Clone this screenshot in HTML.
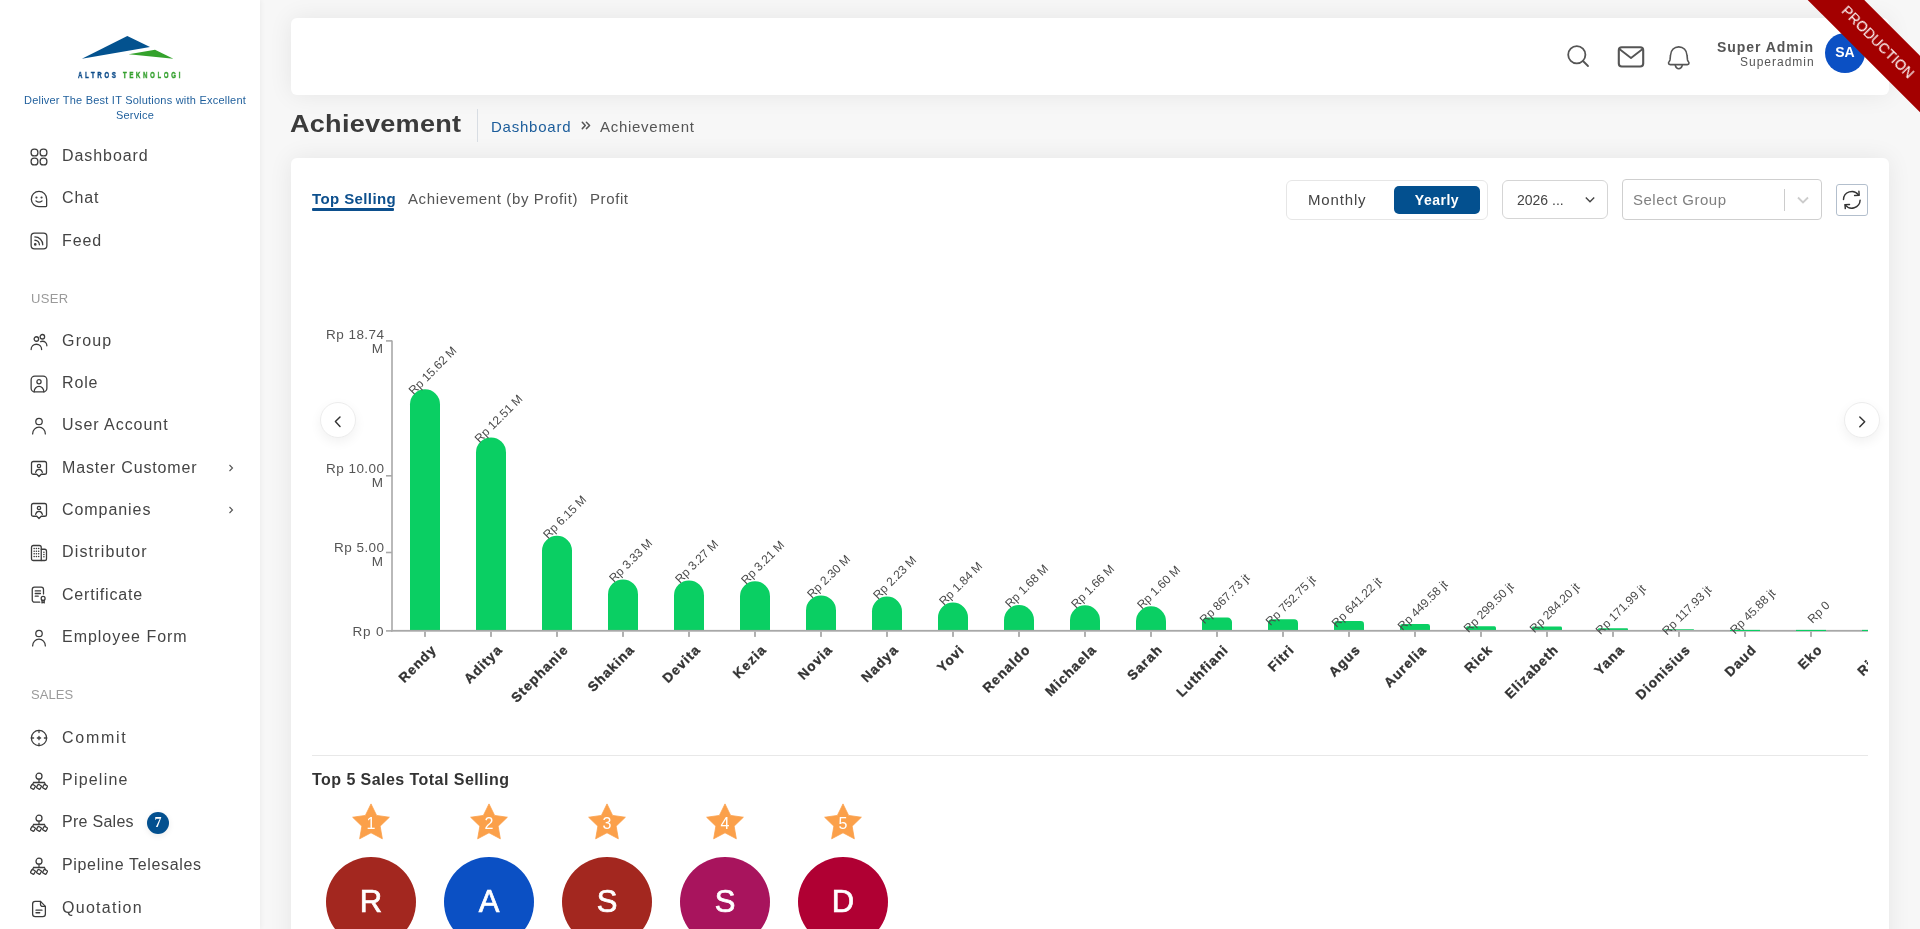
<!DOCTYPE html>
<html><head><meta charset="utf-8">
<style>
*{box-sizing:border-box;margin:0;padding:0}
html,body{width:1920px;height:929px;overflow:hidden}
body{background:#f7f7f7;font-family:"Liberation Sans",sans-serif;color:#444;position:relative;-webkit-font-smoothing:antialiased}
.abs{position:absolute;white-space:nowrap;line-height:1;will-change:transform}
#sidebar{position:absolute;left:0;top:0;width:260px;height:929px;background:#fff;box-shadow:1px 0 5px rgba(0,0,0,0.05);z-index:1}
.mi{position:absolute;left:62px;font-size:16px;color:#444;letter-spacing:0.65px;line-height:1;white-space:nowrap;will-change:transform}
.ic{position:absolute;left:30px;width:18px;height:18px}
.ic svg{display:block;width:18px;height:18px;fill:none;stroke:#3c3c3c;stroke-width:1.7;stroke-linecap:round;stroke-linejoin:round}
.sec{position:absolute;left:31px;font-size:13px;color:#9a9a9a;letter-spacing:0.4px;line-height:1;will-change:transform}
.chev{position:absolute;left:228px;width:6px;height:10px}
.card{position:absolute;background:#fff;border-radius:6px;box-shadow:0 0 24px rgba(0,0,0,0.075)}
</style></head><body>

<div id="sidebar">
  <svg class="abs" style="left:0;top:0" width="260" height="90" viewBox="0 0 260 90">
    <polygon points="81.9,58.8 127.3,36 150,47.1" fill="#03528f"/>
    <polygon points="128.6,54.3 155,49.8 173.4,58.8" fill="#34a22c"/>
  </svg>
  <div class="abs" style="left:77.5px;top:70.6px;font-size:9.2px;font-weight:700;letter-spacing:4.05px;transform:scaleX(0.66);transform-origin:0 0;-webkit-text-stroke:0.45px currentColor"><span style="color:#0d4c8a">ALTROS</span> <span style="color:#34a02e">TEKNOLOGI</span></div>
  <div class="abs" style="left:4.7px;width:260px;text-align:center;top:93.2px;font-size:11px;line-height:14.8px;color:#1f5f9c;white-space:normal;padding:0 12px;letter-spacing:0.22px">Deliver The Best IT Solutions with Excellent Service</div>
  <div class="ic" style="top:147.6px"><svg viewBox="0 0 24 24"><rect x="1.5" y="1.5" width="9" height="9" rx="4"/><rect x="13.5" y="1.5" width="9" height="9" rx="4"/><rect x="1.5" y="13.5" width="9" height="9" rx="4"/><rect x="13.5" y="13.5" width="9" height="9" rx="4"/></svg></div>
  <div class="mi" style="top:148.1px;letter-spacing:0.93px">Dashboard</div>
  <div class="ic" style="top:189.5px"><svg viewBox="0 0 24 24"><path d="M12 1.8C6.2 1.8 1.8 6.4 1.8 12.2c0 5.6 4.4 9.9 10.2 9.9h9.2c.6 0 1-.4 1-1v-8.9C22.2 6.4 17.8 1.8 12 1.8z"/><circle cx="8.6" cy="10" r=".6" fill="#3c3c3c"/><circle cx="15.4" cy="10" r=".6" fill="#3c3c3c"/><path d="M8 14.6c2.2 1.6 5.8 1.6 8 0"/></svg></div>
  <div class="mi" style="top:190.0px;letter-spacing:0.87px">Chat</div>
  <div class="ic" style="top:232.0px"><svg viewBox="0 0 24 24"><rect x="1.5" y="1.5" width="21" height="21" rx="4.5"/><path d="M6.5 6.5c5.8 0 10.5 4.7 10.5 10.5"/><path d="M6.5 11c3.3 0 6 2.7 6 6"/><circle cx="7" cy="16.5" r=".9" fill="#3c3c3c"/></svg></div>
  <div class="mi" style="top:232.5px;letter-spacing:0.93px">Feed</div>
  <div class="ic" style="top:332.7px"><svg viewBox="0 0 24 24"><circle cx="8.5" cy="8" r="3"/><circle cx="16.5" cy="5" r="3"/><path d="M1.5 22c0-4 3.1-7 7-7s7 3 7 7"/><path d="M14 11.6c.8-.4 1.6-.6 2.5-.6 3.3 0 6 2.6 6 6"/></svg></div>
  <div class="mi" style="top:333.2px;letter-spacing:1.2px">Group</div>
  <div class="ic" style="top:374.6px"><svg viewBox="0 0 24 24"><rect x="1.5" y="1.5" width="21" height="21" rx="5"/><circle cx="12" cy="9" r="2.8"/><path d="M5.5 22.5c0-4 2.9-7.2 6.5-7.2s6.5 3.2 6.5 7.2"/></svg></div>
  <div class="mi" style="top:375.1px;letter-spacing:0.87px">Role</div>
  <div class="ic" style="top:416.6px"><svg viewBox="0 0 24 24"><circle cx="12" cy="6" r="4.3"/><path d="M3.5 22.5c0-5 3.8-9 8.5-9s8.5 4 8.5 9"/></svg></div>
  <div class="mi" style="top:417.1px;letter-spacing:0.95px">User Account</div>
  <div class="ic" style="top:459.8px"><svg viewBox="0 0 24 24"><path d="M4.5 2h15c1.6 0 2.5.9 2.5 2.5v12c0 1.6-.9 2.5-2.5 2.5h-4.5l-3 3-3-3h-4.5C2.9 19 2 18.1 2 16.5v-12C2 2.9 2.9 2 4.5 2z"/><circle cx="12" cy="8" r="2.2"/><path d="M7.5 16.5c.6-2.4 2.3-4 4.5-4s3.9 1.6 4.5 4"/></svg></div>
  <div class="mi" style="top:460.3px;letter-spacing:0.85px">Master Customer</div>
  <svg class="chev" style="top:463.0px" viewBox="0 0 6 10"><path d="M1.5 2l3 3-3 3" fill="none" stroke="#555" stroke-width="1.1"/></svg>
  <div class="ic" style="top:501.9px"><svg viewBox="0 0 24 24"><path d="M4.5 2h15c1.6 0 2.5.9 2.5 2.5v12c0 1.6-.9 2.5-2.5 2.5h-4.5l-3 3-3-3h-4.5C2.9 19 2 18.1 2 16.5v-12C2 2.9 2.9 2 4.5 2z"/><circle cx="12" cy="8" r="2.2"/><path d="M7.5 16.5c.6-2.4 2.3-4 4.5-4s3.9 1.6 4.5 4"/></svg></div>
  <div class="mi" style="top:502.4px;letter-spacing:0.94px">Companies</div>
  <svg class="chev" style="top:505.1px" viewBox="0 0 6 10"><path d="M1.5 2l3 3-3 3" fill="none" stroke="#555" stroke-width="1.1"/></svg>
  <div class="ic" style="top:543.5px"><svg viewBox="0 0 24 24"><path d="M2 19.5v-15C2 3 3 2 4.5 2h8C14 2 15 3 15 4.5V22H4.5C3 22 2 21 2 19.5z"/><path d="M15 7h4.5C21 7 22 8 22 9.5v10c0 1.5-1 2.5-2.5 2.5H15"/><path d="M5.5 6h.1M8.5 6h.1M11.5 6h.1M5.5 9.5h.1M8.5 9.5h.1M11.5 9.5h.1M5.5 13h.1M8.5 13h.1M11.5 13h.1M5.5 16.5h.1M8.5 16.5h.1M11.5 16.5h.1M18.5 11h.1M18.5 14h.1M18.5 17h.1" stroke-width="2"/></svg></div>
  <div class="mi" style="top:544.0px;letter-spacing:1.17px">Distributor</div>
  <div class="ic" style="top:586.4px"><svg viewBox="0 0 24 24"><path d="M13 21.5H6c-1.7 0-3-1.3-3-3v-14c0-1.7 1.3-3 3-3h9c1.7 0 3 1.3 3 3v6"/><path d="M7 6.5h7M7 10h7M7 13.5h4"/><circle cx="17.5" cy="16.5" r="2.6"/><path d="M16 19v3.5l1.5-1 1.5 1V19"/></svg></div>
  <div class="mi" style="top:586.9px;letter-spacing:0.81px">Certificate</div>
  <div class="ic" style="top:628.9px"><svg viewBox="0 0 24 24"><circle cx="12" cy="6" r="4.3"/><path d="M3.5 22.5c0-5 3.8-9 8.5-9s8.5 4 8.5 9"/></svg></div>
  <div class="mi" style="top:629.4px;letter-spacing:0.98px">Employee Form</div>
  <div class="ic" style="top:729.0px"><svg viewBox="0 0 24 24"><circle cx="12" cy="12" r="10.2"/><path d="M12 1.8v3M12 19.2v3M1.8 12h3M19.2 12h3M9.8 12h4.4M12 9.8v4.4"/></svg></div>
  <div class="mi" style="top:729.5px;letter-spacing:1.74px">Commit</div>
  <div class="ic" style="top:771.8px"><svg viewBox="0 0 24 24"><circle cx="12" cy="5.6" r="4"/><path d="M12 9.6v4.2M4.8 14h14.4M4.8 14l-1.6 3M19.2 14l1.6 3"/><rect x="-2.6" y="-2.6" width="5.2" height="5.2" rx="1" transform="translate(3.9 19.8) rotate(30)"/><rect x="-2.6" y="-2.6" width="5.2" height="5.2" rx="1" transform="translate(12 19.8) rotate(30)"/><rect x="-2.6" y="-2.6" width="5.2" height="5.2" rx="1" transform="translate(20.1 19.8) rotate(30)"/></svg></div>
  <div class="mi" style="top:772.3px;letter-spacing:1.21px">Pipeline</div>
  <div class="ic" style="top:813.7px"><svg viewBox="0 0 24 24"><circle cx="12" cy="5.6" r="4"/><path d="M12 9.6v4.2M4.8 14h14.4M4.8 14l-1.6 3M19.2 14l1.6 3"/><rect x="-2.6" y="-2.6" width="5.2" height="5.2" rx="1" transform="translate(3.9 19.8) rotate(30)"/><rect x="-2.6" y="-2.6" width="5.2" height="5.2" rx="1" transform="translate(12 19.8) rotate(30)"/><rect x="-2.6" y="-2.6" width="5.2" height="5.2" rx="1" transform="translate(20.1 19.8) rotate(30)"/></svg></div>
  <div class="mi" style="top:814.2px;letter-spacing:0.28px">Pre Sales</div>
  <div class="ic" style="top:856.6px"><svg viewBox="0 0 24 24"><circle cx="12" cy="5.6" r="4"/><path d="M12 9.6v4.2M4.8 14h14.4M4.8 14l-1.6 3M19.2 14l1.6 3"/><rect x="-2.6" y="-2.6" width="5.2" height="5.2" rx="1" transform="translate(3.9 19.8) rotate(30)"/><rect x="-2.6" y="-2.6" width="5.2" height="5.2" rx="1" transform="translate(12 19.8) rotate(30)"/><rect x="-2.6" y="-2.6" width="5.2" height="5.2" rx="1" transform="translate(20.1 19.8) rotate(30)"/></svg></div>
  <div class="mi" style="top:857.1px;letter-spacing:0.66px">Pipeline Telesales</div>
  <div class="ic" style="top:899.5px"><svg viewBox="0 0 24 24"><path d="M14 1.8H7C4.8 1.8 3.5 3 3.5 5.2v13.6c0 2.2 1.3 3.4 3.5 3.4h10c2.2 0 3.5-1.2 3.5-3.4V8.5z"/><path d="M14 1.8v3.8c0 1.6 1.2 2.9 2.9 2.9h3.6"/><path d="M8 13.5h8M8 17h5"/></svg></div>
  <div class="mi" style="top:900.0px;letter-spacing:1.28px">Quotation</div>
  <div class="sec" style="top:292.4px;letter-spacing:0.33px">USER</div>
  <div class="sec" style="top:688.3px;letter-spacing:0.07px">SALES</div>
  <div class="abs" style="left:147px;top:812px;width:22px;height:22px;border-radius:50%;background:#03508f;color:#fff;font-family:'Liberation Serif',serif;font-size:14px;font-weight:700;text-align:center;line-height:22px;box-shadow:0 2px 6px rgba(0,0,0,0.08)">7</div>
</div>

<!-- header card -->
<div class="card" style="left:291px;top:18px;width:1598px;height:77px"></div>

<!-- content card -->
<div class="card" style="left:291px;top:158px;width:1598px;height:800px"></div>


<!-- header content -->
<svg class="abs" style="left:1560px;top:36px" width="140" height="40" viewBox="1560 36 140 40">
  <g fill="none" stroke="#555" stroke-width="1.8" stroke-linecap="round" stroke-linejoin="round">
    <circle cx="1576.8" cy="54.7" r="8.6"/>
    <path d="M1583 61l5 5"/>
    <rect x="1618.8" y="47.3" width="24.4" height="19.2" rx="3" stroke-width="2.1"/>
    <path d="M1620 49.6l11 8.4 11-8.4" stroke-width="1.9"/>
    <path d="M1670.5 55.2C1670.9 50.2 1674.2 46.9 1678.75 46.9S1686.6 50.2 1687 55.2L1687.5 59.9C1687.7 61.3 1689 62 1689 63.1C1689 64 1688.3 64.6 1687.3 64.6H1670.2C1669.2 64.6 1668.5 64 1668.5 63.1C1668.5 62 1669.8 61.3 1670 59.9Z" stroke-width="1.6"/>
    <path d="M1675.3 65.6c.6 2 1.8 3.2 3.45 3.2s2.85-1.2 3.45-3.2" stroke-width="1.6"/>
  </g>
</svg>
<div class="abs" style="right:105.5px;top:40px;font-size:14px;font-weight:700;color:#555;letter-spacing:0.95px">Super Admin</div>
<div class="abs" style="right:105.5px;top:55.5px;font-size:12px;color:#555;letter-spacing:1.0px">Superadmin</div>
<div class="abs" style="left:1825px;top:33px;width:40px;height:40px;border-radius:50%;background:#0b50c4;color:#fff;font-size:14px;font-weight:700;text-align:center;line-height:38.5px">SA</div>

<!-- title -->
<div class="abs" style="left:290px;top:112px;font-size:24px;font-weight:700;color:#3b3b3b;letter-spacing:0.2px;transform:scaleX(1.13);transform-origin:0 0">Achievement</div>
<div class="abs" style="left:477px;top:109px;width:1px;height:33px;background:#d8dde3"></div>
<div class="abs" style="left:491px;top:118.5px;font-size:15px;color:#1c5d9b;letter-spacing:0.77px">Dashboard</div>
<svg class="abs" style="left:575px;top:115px" width="25" height="20" viewBox="575 115 25 20"><path d="M582.3 122.3l3 3.25-3 3.05M586.4 122.3l3.2 3.25-3.2 3.05" fill="none" stroke="#555" stroke-width="1.5" stroke-linecap="round" stroke-linejoin="round"/></svg>
<div class="abs" style="left:600px;top:118.5px;font-size:15px;color:#555;letter-spacing:0.72px">Achievement</div>

<!-- tabs -->
<div class="abs" style="left:312px;top:191px;font-size:15px;font-weight:700;color:#0c4f8d;letter-spacing:0.4px">Top Selling</div>
<div class="abs" style="left:312px;top:208px;width:82px;height:2.5px;background:#0c4f8d;border-radius:1px"></div>
<div class="abs" style="left:408px;top:191px;font-size:15px;color:#555;letter-spacing:0.62px">Achievement (by Profit)</div>
<div class="abs" style="left:590px;top:191px;font-size:15px;color:#555;letter-spacing:0.6px">Profit</div>

<!-- toggle -->
<div class="abs" style="left:1286px;top:180px;width:202px;height:40px;border:1px solid #e6e6e6;border-radius:6px"></div>
<div class="abs" style="left:1308px;top:192px;font-size:15px;color:#444;letter-spacing:0.85px">Monthly</div>
<div class="abs" style="left:1394px;top:186px;width:86px;height:28px;background:#03508f;border-radius:5px"></div>
<div class="abs" style="left:1394px;top:193px;width:86px;text-align:center;font-size:14px;font-weight:700;color:#fff;letter-spacing:0.5px">Yearly</div>

<!-- year select -->
<div class="abs" style="left:1502px;top:180px;width:106px;height:39px;border:1px solid #d5d5d5;border-radius:6px"></div>
<div class="abs" style="left:1517px;top:193px;font-size:14px;color:#444">2026 ...</div>
<svg class="abs" style="left:1583px;top:194px" width="14" height="12" viewBox="0 0 14 12"><path d="M2.8 3.6l4.2 4.2 4.2-4.2" fill="none" stroke="#444" stroke-width="1.4"/></svg>

<!-- group select -->
<div class="abs" style="left:1622px;top:179px;width:200px;height:41px;border:1px solid #cfcfcf;border-radius:4px"></div>
<div class="abs" style="left:1784px;top:189px;width:1px;height:22px;background:#cccccc"></div>
<div class="abs" style="left:1633px;top:192px;font-size:15px;color:#808080;letter-spacing:0.5px">Select Group</div>
<svg class="abs" style="left:1796px;top:194px" width="14" height="12" viewBox="0 0 14 12"><path d="M2 3.5l5 5 5-5" fill="none" stroke="#cccccc" stroke-width="1.8"/></svg>

<!-- refresh -->
<div class="abs" style="left:1836px;top:184px;width:32px;height:32px;border:1px solid #b3bfcd;border-radius:3px"></div>
<svg class="abs" style="left:1832px;top:180px" width="40" height="40" viewBox="1832 180 40 40"><g fill="none" stroke="#333" stroke-width="1.45" stroke-linecap="round" stroke-linejoin="round"><path d="M1843.5 199.6A8.3 8.3 0 0 1 1858.4 194.8"/><path d="M1858.9 191.3L1859.2 195.3L1854.6 195.5"/><path d="M1860.1 200.3A8.3 8.3 0 0 1 1845.2 204.9"/><path d="M1849.5 204.5L1845 204.6L1845.3 208.6"/></g></svg>



<!-- chart -->
<svg class="abs" style="left:0;top:0;z-index:2" width="1920" height="929" viewBox="0 0 1920 929">
<defs><clipPath id="cc"><rect x="300" y="230" width="1568" height="500"/></clipPath></defs>
<g clip-path="url(#cc)">
<path d="M410 631.0V404.36A15.00 15.00 0 0 1 425.00 389.36H425.00A15.00 15.00 0 0 1 440 404.36V631.0Z" fill="#0acf63"/>
<path d="M476 631.0V452.47A15.00 15.00 0 0 1 491.00 437.47H491.00A15.00 15.00 0 0 1 506 452.47V631.0Z" fill="#0acf63"/>
<path d="M542 631.0V550.86A15.00 15.00 0 0 1 557.00 535.86H557.00A15.00 15.00 0 0 1 572 550.86V631.0Z" fill="#0acf63"/>
<path d="M608 631.0V594.48A15.00 15.00 0 0 1 623.00 579.48H623.00A15.00 15.00 0 0 1 638 594.48V631.0Z" fill="#0acf63"/>
<path d="M674 631.0V595.41A15.00 15.00 0 0 1 689.00 580.41H689.00A15.00 15.00 0 0 1 704 595.41V631.0Z" fill="#0acf63"/>
<path d="M740 631.0V596.34A15.00 15.00 0 0 1 755.00 581.34H755.00A15.00 15.00 0 0 1 770 596.34V631.0Z" fill="#0acf63"/>
<path d="M806 631.0V610.42A15.00 15.00 0 0 1 821.00 595.42H821.00A15.00 15.00 0 0 1 836 610.42V631.0Z" fill="#0acf63"/>
<path d="M872 631.0V611.50A15.00 15.00 0 0 1 887.00 596.50H887.00A15.00 15.00 0 0 1 902 611.50V631.0Z" fill="#0acf63"/>
<path d="M938 631.0V617.54A15.00 15.00 0 0 1 953.00 602.54H953.00A15.00 15.00 0 0 1 968 617.54V631.0Z" fill="#0acf63"/>
<path d="M1004 631.0V620.01A15.00 15.00 0 0 1 1019.00 605.01H1019.00A15.00 15.00 0 0 1 1034 620.01V631.0Z" fill="#0acf63"/>
<path d="M1070 631.0V620.32A15.00 15.00 0 0 1 1085.00 605.32H1085.00A15.00 15.00 0 0 1 1100 620.32V631.0Z" fill="#0acf63"/>
<path d="M1136 631.0V621.25A15.00 15.00 0 0 1 1151.00 606.25H1151.00A15.00 15.00 0 0 1 1166 621.25V631.0Z" fill="#0acf63"/>
<path d="M1202 631.0V622.05A4.47 4.47 0 0 1 1206.47 617.58H1227.53A4.47 4.47 0 0 1 1232 622.05V631.0Z" fill="#0acf63"/>
<path d="M1268 631.0V623.24A3.88 3.88 0 0 1 1271.88 619.35H1294.12A3.88 3.88 0 0 1 1298 623.24V631.0Z" fill="#0acf63"/>
<path d="M1334 631.0V624.39A3.31 3.31 0 0 1 1337.31 621.08H1360.69A3.31 3.31 0 0 1 1364 624.39V631.0Z" fill="#0acf63"/>
<path d="M1400 631.0V626.36A2.32 2.32 0 0 1 1402.32 624.04H1427.68A2.32 2.32 0 0 1 1430 626.36V631.0Z" fill="#0acf63"/>
<path d="M1466 631.0V627.91A1.54 1.54 0 0 1 1467.54 626.37H1494.46A1.54 1.54 0 0 1 1496 627.91V631.0Z" fill="#0acf63"/>
<path d="M1532 631.0V628.07A1.47 1.47 0 0 1 1533.47 626.60H1560.53A1.47 1.47 0 0 1 1562 628.07V631.0Z" fill="#0acf63"/>
<path d="M1598 631.0V629.23A0.89 0.89 0 0 1 1598.89 628.34H1627.11A0.89 0.89 0 0 1 1628 629.23V631.0Z" fill="#0acf63"/>
<path d="M1664 631.0V629.78A0.61 0.61 0 0 1 1664.61 629.18H1693.39A0.61 0.61 0 0 1 1694 629.78V631.0Z" fill="#0acf63"/>
<rect x="391" y="629.9" width="1477" height="1.8" fill="#a8a8a8"/>
<rect x="1730" y="629.9" width="30" height="1.1" fill="#0acf63"/>
<rect x="1796" y="629.9" width="30" height="1.1" fill="#0acf63"/>
<rect x="1862" y="629.9" width="30" height="1.1" fill="#0acf63"/>
<rect x="424.1" y="631.7" width="1.8" height="5.2" fill="#a8a8a8"/>
<rect x="490.1" y="631.7" width="1.8" height="5.2" fill="#a8a8a8"/>
<rect x="556.1" y="631.7" width="1.8" height="5.2" fill="#a8a8a8"/>
<rect x="622.1" y="631.7" width="1.8" height="5.2" fill="#a8a8a8"/>
<rect x="688.1" y="631.7" width="1.8" height="5.2" fill="#a8a8a8"/>
<rect x="754.1" y="631.7" width="1.8" height="5.2" fill="#a8a8a8"/>
<rect x="820.1" y="631.7" width="1.8" height="5.2" fill="#a8a8a8"/>
<rect x="886.1" y="631.7" width="1.8" height="5.2" fill="#a8a8a8"/>
<rect x="952.1" y="631.7" width="1.8" height="5.2" fill="#a8a8a8"/>
<rect x="1018.1" y="631.7" width="1.8" height="5.2" fill="#a8a8a8"/>
<rect x="1084.1" y="631.7" width="1.8" height="5.2" fill="#a8a8a8"/>
<rect x="1150.1" y="631.7" width="1.8" height="5.2" fill="#a8a8a8"/>
<rect x="1216.1" y="631.7" width="1.8" height="5.2" fill="#a8a8a8"/>
<rect x="1282.1" y="631.7" width="1.8" height="5.2" fill="#a8a8a8"/>
<rect x="1348.1" y="631.7" width="1.8" height="5.2" fill="#a8a8a8"/>
<rect x="1414.1" y="631.7" width="1.8" height="5.2" fill="#a8a8a8"/>
<rect x="1480.1" y="631.7" width="1.8" height="5.2" fill="#a8a8a8"/>
<rect x="1546.1" y="631.7" width="1.8" height="5.2" fill="#a8a8a8"/>
<rect x="1612.1" y="631.7" width="1.8" height="5.2" fill="#a8a8a8"/>
<rect x="1678.1" y="631.7" width="1.8" height="5.2" fill="#a8a8a8"/>
<rect x="1744.1" y="631.7" width="1.8" height="5.2" fill="#a8a8a8"/>
<rect x="1810.1" y="631.7" width="1.8" height="5.2" fill="#a8a8a8"/>
<rect x="1876.1" y="631.7" width="1.8" height="5.2" fill="#a8a8a8"/>
<text x="435.5" y="373.4" transform="rotate(-45 435.5 373.4)" text-anchor="middle" font-size="12" fill="#4a4a4a" font-family="Liberation Sans">Rp 15.62 M</text>
<text x="501.5" y="421.5" transform="rotate(-45 501.5 421.5)" text-anchor="middle" font-size="12" fill="#4a4a4a" font-family="Liberation Sans">Rp 12.51 M</text>
<text x="567.5" y="519.9" transform="rotate(-45 567.5 519.9)" text-anchor="middle" font-size="12" fill="#4a4a4a" font-family="Liberation Sans">Rp 6.15 M</text>
<text x="633.5" y="563.5" transform="rotate(-45 633.5 563.5)" text-anchor="middle" font-size="12" fill="#4a4a4a" font-family="Liberation Sans">Rp 3.33 M</text>
<text x="699.5" y="564.4" transform="rotate(-45 699.5 564.4)" text-anchor="middle" font-size="12" fill="#4a4a4a" font-family="Liberation Sans">Rp 3.27 M</text>
<text x="765.5" y="565.3" transform="rotate(-45 765.5 565.3)" text-anchor="middle" font-size="12" fill="#4a4a4a" font-family="Liberation Sans">Rp 3.21 M</text>
<text x="831.5" y="579.4" transform="rotate(-45 831.5 579.4)" text-anchor="middle" font-size="12" fill="#4a4a4a" font-family="Liberation Sans">Rp 2.30 M</text>
<text x="897.5" y="580.5" transform="rotate(-45 897.5 580.5)" text-anchor="middle" font-size="12" fill="#4a4a4a" font-family="Liberation Sans">Rp 2.23 M</text>
<text x="963.5" y="586.5" transform="rotate(-45 963.5 586.5)" text-anchor="middle" font-size="12" fill="#4a4a4a" font-family="Liberation Sans">Rp 1.84 M</text>
<text x="1029.5" y="589.0" transform="rotate(-45 1029.5 589.0)" text-anchor="middle" font-size="12" fill="#4a4a4a" font-family="Liberation Sans">Rp 1.68 M</text>
<text x="1095.5" y="589.3" transform="rotate(-45 1095.5 589.3)" text-anchor="middle" font-size="12" fill="#4a4a4a" font-family="Liberation Sans">Rp 1.66 M</text>
<text x="1161.5" y="590.2" transform="rotate(-45 1161.5 590.2)" text-anchor="middle" font-size="12" fill="#4a4a4a" font-family="Liberation Sans">Rp 1.60 M</text>
<text x="1227.5" y="601.6" transform="rotate(-45 1227.5 601.6)" text-anchor="middle" font-size="12" fill="#4a4a4a" font-family="Liberation Sans">Rp 867.73 jt</text>
<text x="1293.5" y="603.4" transform="rotate(-45 1293.5 603.4)" text-anchor="middle" font-size="12" fill="#4a4a4a" font-family="Liberation Sans">Rp 752.75 jt</text>
<text x="1359.5" y="605.1" transform="rotate(-45 1359.5 605.1)" text-anchor="middle" font-size="12" fill="#4a4a4a" font-family="Liberation Sans">Rp 641.22 jt</text>
<text x="1425.5" y="608.0" transform="rotate(-45 1425.5 608.0)" text-anchor="middle" font-size="12" fill="#4a4a4a" font-family="Liberation Sans">Rp 449.58 jt</text>
<text x="1491.5" y="610.4" transform="rotate(-45 1491.5 610.4)" text-anchor="middle" font-size="12" fill="#4a4a4a" font-family="Liberation Sans">Rp 299.50 jt</text>
<text x="1557.5" y="610.6" transform="rotate(-45 1557.5 610.6)" text-anchor="middle" font-size="12" fill="#4a4a4a" font-family="Liberation Sans">Rp 284.20 jt</text>
<text x="1623.5" y="612.3" transform="rotate(-45 1623.5 612.3)" text-anchor="middle" font-size="12" fill="#4a4a4a" font-family="Liberation Sans">Rp 171.99 jt</text>
<text x="1689.5" y="613.2" transform="rotate(-45 1689.5 613.2)" text-anchor="middle" font-size="12" fill="#4a4a4a" font-family="Liberation Sans">Rp 117.93 jt</text>
<text x="1755.5" y="614.3" transform="rotate(-45 1755.5 614.3)" text-anchor="middle" font-size="12" fill="#4a4a4a" font-family="Liberation Sans">Rp 45.88 jt</text>
<text x="1821.5" y="615.0" transform="rotate(-45 1821.5 615.0)" text-anchor="middle" font-size="12" fill="#4a4a4a" font-family="Liberation Sans">Rp 0</text>
<text x="437.3" y="650.5" transform="rotate(-45 437.3 650.5)" text-anchor="end" font-size="13.5" font-weight="700" fill="#333" stroke="#333" stroke-width="0.35" letter-spacing="1.1" font-family="Liberation Sans">Rendy</text>
<text x="503.3" y="650.5" transform="rotate(-45 503.3 650.5)" text-anchor="end" font-size="13.5" font-weight="700" fill="#333" stroke="#333" stroke-width="0.35" letter-spacing="1.1" font-family="Liberation Sans">Aditya</text>
<text x="569.3" y="650.5" transform="rotate(-45 569.3 650.5)" text-anchor="end" font-size="13.5" font-weight="700" fill="#333" stroke="#333" stroke-width="0.35" letter-spacing="1.1" font-family="Liberation Sans">Stephanie</text>
<text x="635.3" y="650.5" transform="rotate(-45 635.3 650.5)" text-anchor="end" font-size="13.5" font-weight="700" fill="#333" stroke="#333" stroke-width="0.35" letter-spacing="1.1" font-family="Liberation Sans">Shakina</text>
<text x="701.3" y="650.5" transform="rotate(-45 701.3 650.5)" text-anchor="end" font-size="13.5" font-weight="700" fill="#333" stroke="#333" stroke-width="0.35" letter-spacing="1.1" font-family="Liberation Sans">Devita</text>
<text x="767.3" y="650.5" transform="rotate(-45 767.3 650.5)" text-anchor="end" font-size="13.5" font-weight="700" fill="#333" stroke="#333" stroke-width="0.35" letter-spacing="1.1" font-family="Liberation Sans">Kezia</text>
<text x="833.3" y="650.5" transform="rotate(-45 833.3 650.5)" text-anchor="end" font-size="13.5" font-weight="700" fill="#333" stroke="#333" stroke-width="0.35" letter-spacing="1.1" font-family="Liberation Sans">Novia</text>
<text x="899.3" y="650.5" transform="rotate(-45 899.3 650.5)" text-anchor="end" font-size="13.5" font-weight="700" fill="#333" stroke="#333" stroke-width="0.35" letter-spacing="1.1" font-family="Liberation Sans">Nadya</text>
<text x="965.3" y="650.5" transform="rotate(-45 965.3 650.5)" text-anchor="end" font-size="13.5" font-weight="700" fill="#333" stroke="#333" stroke-width="0.35" letter-spacing="1.1" font-family="Liberation Sans">Yovi</text>
<text x="1031.3" y="650.5" transform="rotate(-45 1031.3 650.5)" text-anchor="end" font-size="13.5" font-weight="700" fill="#333" stroke="#333" stroke-width="0.35" letter-spacing="1.1" font-family="Liberation Sans">Renaldo</text>
<text x="1097.3" y="650.5" transform="rotate(-45 1097.3 650.5)" text-anchor="end" font-size="13.5" font-weight="700" fill="#333" stroke="#333" stroke-width="0.35" letter-spacing="1.1" font-family="Liberation Sans">Michaela</text>
<text x="1163.3" y="650.5" transform="rotate(-45 1163.3 650.5)" text-anchor="end" font-size="13.5" font-weight="700" fill="#333" stroke="#333" stroke-width="0.35" letter-spacing="1.1" font-family="Liberation Sans">Sarah</text>
<text x="1229.3" y="650.5" transform="rotate(-45 1229.3 650.5)" text-anchor="end" font-size="13.5" font-weight="700" fill="#333" stroke="#333" stroke-width="0.35" letter-spacing="1.1" font-family="Liberation Sans">Luthfiani</text>
<text x="1295.3" y="650.5" transform="rotate(-45 1295.3 650.5)" text-anchor="end" font-size="13.5" font-weight="700" fill="#333" stroke="#333" stroke-width="0.35" letter-spacing="1.1" font-family="Liberation Sans">Fitri</text>
<text x="1361.3" y="650.5" transform="rotate(-45 1361.3 650.5)" text-anchor="end" font-size="13.5" font-weight="700" fill="#333" stroke="#333" stroke-width="0.35" letter-spacing="1.1" font-family="Liberation Sans">Agus</text>
<text x="1427.3" y="650.5" transform="rotate(-45 1427.3 650.5)" text-anchor="end" font-size="13.5" font-weight="700" fill="#333" stroke="#333" stroke-width="0.35" letter-spacing="1.1" font-family="Liberation Sans">Aurelia</text>
<text x="1493.3" y="650.5" transform="rotate(-45 1493.3 650.5)" text-anchor="end" font-size="13.5" font-weight="700" fill="#333" stroke="#333" stroke-width="0.35" letter-spacing="1.1" font-family="Liberation Sans">Rick</text>
<text x="1559.3" y="650.5" transform="rotate(-45 1559.3 650.5)" text-anchor="end" font-size="13.5" font-weight="700" fill="#333" stroke="#333" stroke-width="0.35" letter-spacing="1.1" font-family="Liberation Sans">Elizabeth</text>
<text x="1625.3" y="650.5" transform="rotate(-45 1625.3 650.5)" text-anchor="end" font-size="13.5" font-weight="700" fill="#333" stroke="#333" stroke-width="0.35" letter-spacing="1.1" font-family="Liberation Sans">Yana</text>
<text x="1691.3" y="650.5" transform="rotate(-45 1691.3 650.5)" text-anchor="end" font-size="13.5" font-weight="700" fill="#333" stroke="#333" stroke-width="0.35" letter-spacing="1.1" font-family="Liberation Sans">Dionisius</text>
<text x="1757.3" y="650.5" transform="rotate(-45 1757.3 650.5)" text-anchor="end" font-size="13.5" font-weight="700" fill="#333" stroke="#333" stroke-width="0.35" letter-spacing="1.1" font-family="Liberation Sans">Daud</text>
<text x="1823.3" y="650.5" transform="rotate(-45 1823.3 650.5)" text-anchor="end" font-size="13.5" font-weight="700" fill="#333" stroke="#333" stroke-width="0.35" letter-spacing="1.1" font-family="Liberation Sans">Eko</text>
<text x="1889.3" y="650.5" transform="rotate(-45 1889.3 650.5)" text-anchor="end" font-size="13.5" font-weight="700" fill="#333" stroke="#333" stroke-width="0.35" letter-spacing="1.1" font-family="Liberation Sans">Rizal</text>
</g>
<rect x="391.2" y="340.5" width="1.6" height="291" fill="#a8a8a8"/>
<rect x="386" y="340.1" width="6" height="1.6" fill="#a8a8a8"/>
<rect x="386" y="475.0" width="6" height="1.6" fill="#a8a8a8"/>
<rect x="386" y="551.7" width="6" height="1.6" fill="#a8a8a8"/>
<rect x="386" y="630.1" width="6" height="1.6" fill="#a8a8a8"/>
<text x="384.5" y="338.8" text-anchor="end" font-size="13.5" fill="#555" letter-spacing="0.45" font-family="Liberation Sans">Rp 18.74</text>
<text x="383" y="352.8" text-anchor="end" font-size="13.5" fill="#555" font-family="Liberation Sans">M</text>
<text x="384.5" y="473.2" text-anchor="end" font-size="13.5" fill="#555" letter-spacing="0.45" font-family="Liberation Sans">Rp 10.00</text>
<text x="383" y="487.2" text-anchor="end" font-size="13.5" fill="#555" font-family="Liberation Sans">M</text>
<text x="384.5" y="551.7" text-anchor="end" font-size="13.5" fill="#555" letter-spacing="0.45" font-family="Liberation Sans">Rp 5.00</text>
<text x="383" y="565.7" text-anchor="end" font-size="13.5" fill="#555" font-family="Liberation Sans">M</text>
<text x="384.5" y="635.5" text-anchor="end" font-size="13.5" fill="#555" letter-spacing="0.9" font-family="Liberation Sans">Rp 0</text>
</svg>

<!-- nav arrows -->
<div class="abs" style="left:320px;top:402px;width:36px;height:36px;border-radius:50%;background:#fff;border:1px solid #ececec;box-shadow:0 4px 12px rgba(0,0,0,0.06);z-index:3"></div>
<svg class="abs" style="left:321px;top:403px;z-index:4" width="34" height="34" viewBox="321 403 34 34"><path d="M340 416.9l-4.6 4.7 4.6 4.8" fill="none" stroke="#333" stroke-width="1.45" stroke-linecap="round" stroke-linejoin="round"/></svg>
<div class="abs" style="left:1844px;top:402px;width:36px;height:36px;border-radius:50%;background:#fff;border:1px solid #ececec;box-shadow:0 4px 12px rgba(0,0,0,0.06);z-index:3"></div>
<svg class="abs" style="left:1845px;top:403px;z-index:4" width="34" height="34" viewBox="1845 403 34 34"><path d="M1859.8 417l4.9 4.8-4.9 5" fill="none" stroke="#333" stroke-width="1.45" stroke-linecap="round" stroke-linejoin="round"/></svg>


<div class="abs" style="left:312px;top:755px;width:1556px;height:1px;background:#e8e8e8"></div>
<div class="abs" style="left:312px;top:771.5px;font-size:16px;font-weight:700;color:#333;letter-spacing:0.45px">Top 5 Sales Total Selling</div>
<svg class="abs" style="left:0;top:0" width="1920" height="929" viewBox="0 0 1920 929">
<polygon points="371.00,803.90 376.64,815.43 389.36,817.24 380.13,826.17 382.34,838.81 371.00,832.80 359.66,838.81 361.87,826.17 352.64,817.24 365.36,815.43" fill="#fba04a" stroke="#fba04a" stroke-width="0.8" stroke-linejoin="round"/><text x="371" y="828.5" text-anchor="middle" font-size="16" fill="#fff" font-family="Liberation Sans">1</text>
<polygon points="489.00,803.90 494.64,815.43 507.36,817.24 498.13,826.17 500.34,838.81 489.00,832.80 477.66,838.81 479.87,826.17 470.64,817.24 483.36,815.43" fill="#fba04a" stroke="#fba04a" stroke-width="0.8" stroke-linejoin="round"/><text x="489" y="828.5" text-anchor="middle" font-size="16" fill="#fff" font-family="Liberation Sans">2</text>
<polygon points="607.00,803.90 612.64,815.43 625.36,817.24 616.13,826.17 618.34,838.81 607.00,832.80 595.66,838.81 597.87,826.17 588.64,817.24 601.36,815.43" fill="#fba04a" stroke="#fba04a" stroke-width="0.8" stroke-linejoin="round"/><text x="607" y="828.5" text-anchor="middle" font-size="16" fill="#fff" font-family="Liberation Sans">3</text>
<polygon points="725.00,803.90 730.64,815.43 743.36,817.24 734.13,826.17 736.34,838.81 725.00,832.80 713.66,838.81 715.87,826.17 706.64,817.24 719.36,815.43" fill="#fba04a" stroke="#fba04a" stroke-width="0.8" stroke-linejoin="round"/><text x="725" y="828.5" text-anchor="middle" font-size="16" fill="#fff" font-family="Liberation Sans">4</text>
<polygon points="843.00,803.90 848.64,815.43 861.36,817.24 852.13,826.17 854.34,838.81 843.00,832.80 831.66,838.81 833.87,826.17 824.64,817.24 837.36,815.43" fill="#fba04a" stroke="#fba04a" stroke-width="0.8" stroke-linejoin="round"/><text x="843" y="828.5" text-anchor="middle" font-size="16" fill="#fff" font-family="Liberation Sans">5</text>
</svg>
<div class="abs" style="left:326px;top:857px;width:90px;height:90px;border-radius:50%;background:#a3271f;color:#fff;font-size:31px;text-align:center;line-height:90px;-webkit-text-stroke:0.7px #fff">R</div>
<div class="abs" style="left:444px;top:857px;width:90px;height:90px;border-radius:50%;background:#0b50c4;color:#fff;font-size:31px;text-align:center;line-height:90px;-webkit-text-stroke:0.7px #fff">A</div>
<div class="abs" style="left:562px;top:857px;width:90px;height:90px;border-radius:50%;background:#a3271f;color:#fff;font-size:31px;text-align:center;line-height:90px;-webkit-text-stroke:0.7px #fff">S</div>
<div class="abs" style="left:680px;top:857px;width:90px;height:90px;border-radius:50%;background:#a8145d;color:#fff;font-size:31px;text-align:center;line-height:90px;-webkit-text-stroke:0.7px #fff">S</div>
<div class="abs" style="left:798px;top:857px;width:90px;height:90px;border-radius:50%;background:#b00033;color:#fff;font-size:31px;text-align:center;line-height:90px;-webkit-text-stroke:0.7px #fff">D</div>
<div class="abs" style="left:1778px;top:22px;width:200px;height:40px;background:#a30000;transform:rotate(45deg);transform-origin:50% 50%;color:#fff;font-size:14.2px;line-height:40px;text-align:center;z-index:10">PRODUCTION</div>
</body></html>
